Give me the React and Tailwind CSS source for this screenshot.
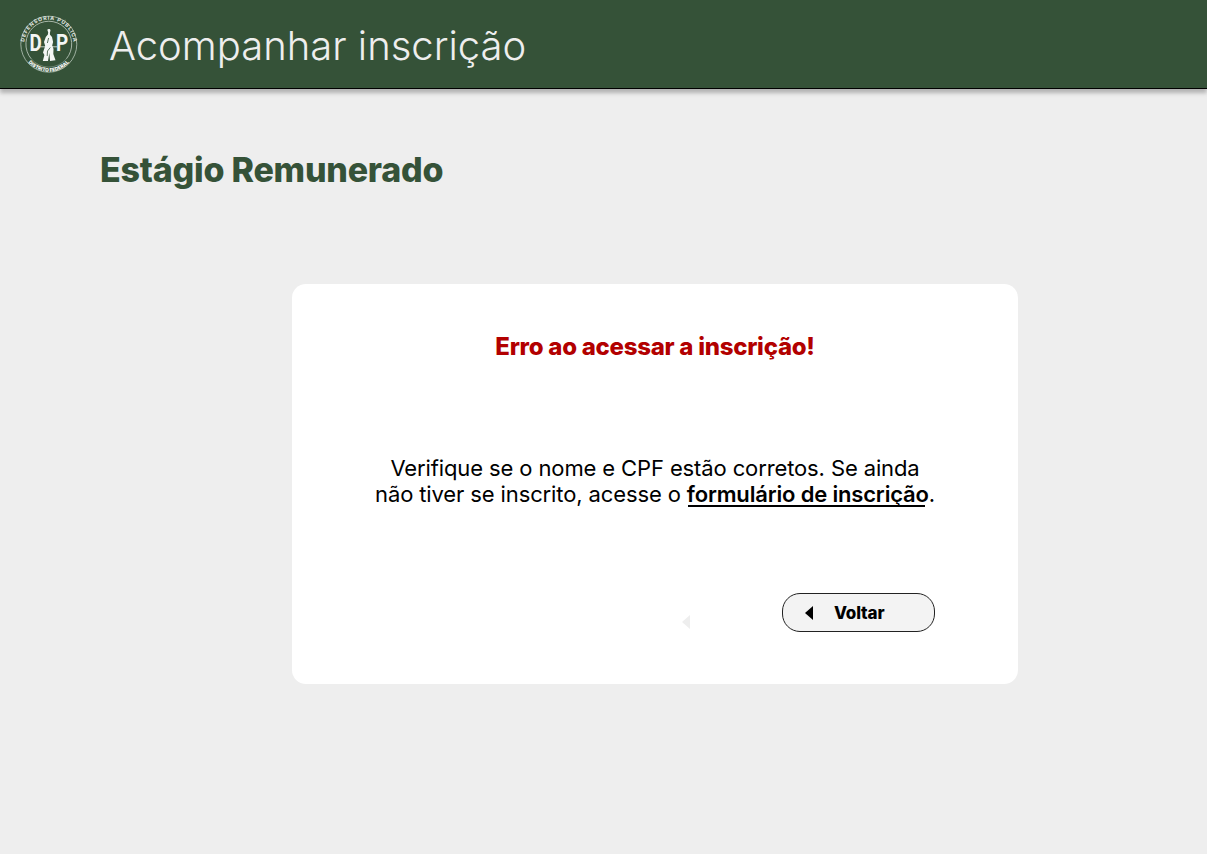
function Seal() {
  return (
    <svg className="h-[60px] w-[60px] shrink-0" viewBox="0 0 60 60" fill="none" role="img" aria-label="Defensoria Pública">
      <defs>
        <path id="seal-top" d="M5.3 30.2 A24.5 24.5 0 0 1 54.3 30.2" />
        <path id="seal-bottom" d="M2.3 30.2 A27.5 27.5 0 0 0 57.3 30.2" />
      </defs>
      <circle cx="29.8" cy="30.2" r="28" stroke="#a9baac" strokeWidth="0.9" />
      <path d="M12.2 44.8 A22.9 22.9 0 1 1 47.4 44.8" stroke="#b4c2b6" strokeWidth="0.9" />
      <path d="M12.2 44.8 A22.9 22.9 0 0 0 47.4 44.8" stroke="#8fa392" strokeWidth="0.6" />
      <text fill="#d7dfd8" fontSize="5.2" fontWeight="800" fontFamily="Inter, sans-serif" textAnchor="middle">
        <textPath href="#seal-top" startOffset="50%" textLength="72">DEFENSORIA PÚBLICA</textPath>
      </text>
      <text fill="#f4f6f4" fontSize="5" fontWeight="900" fontFamily="Inter, sans-serif" textAnchor="middle">
        <textPath href="#seal-bottom" startOffset="50%" textLength="46" lengthAdjust="spacingAndGlyphs">DISTRITO FEDERAL</textPath>
      </text>
      <text x="10.4" y="37" fill="#f4f6f4" fontSize="24.5" fontWeight="700" fontFamily="Roboto, sans-serif" textLength="12.2" lengthAdjust="spacingAndGlyphs">D</text>
      <text x="37" y="37" fill="#f4f6f4" fontSize="24.5" fontWeight="700" fontFamily="Roboto, sans-serif" textLength="12.2" lengthAdjust="spacingAndGlyphs">P</text>
      <path d="M21 32.8 H38" stroke="#e4e9e4" strokeWidth="0.8" />
      <path d="M28.3 15.8 C28.8 14.6 31.3 14.6 31.5 16.2 L30.9 19 L31 20.8 L33 23 L34.1 28 L33.2 31.5 L34.5 35 L34.3 40 L36.5 46.2 L31 47 L30.4 39 L29 47 H23.8 L25.4 41 L24 38.5 L26.2 32 L25 28 L26.8 23 L28.9 20.5 L29.2 18.6 Z" fill="#f4f6f4" />
      <path d="M29.6 24 L28.4 29 M31.3 33.5 L28.5 37 L28.2 42" stroke="#355238" strokeWidth="0.8" />
    </svg>
  );
}

function Arrow({ className }) {
  return (
    <svg className={className} viewBox="0 0 8 14" fill="currentColor" aria-hidden="true">
      <path d="M8 0 V14 L0 7 Z" />
    </svg>
  );
}

export default function App() {
  return (
    <div className="flex h-[854px] w-full flex-col overflow-hidden bg-[#eeeeee] font-['Inter',sans-serif]">
      <header className="flex h-[89px] shrink-0 items-center border-b border-black bg-[#355238] pl-[19px] shadow-[0_4px_4px_rgba(0,0,0,0.25)]">
        <Seal />
        <h1 className="ml-[30px] pt-[3px] text-[40px] leading-[48px] font-light whitespace-nowrap text-[#eeeeee]">
          Acompanhar inscrição
        </h1>
      </header>
      <main className="flex flex-col">
        <h2 className="mt-[61px] ml-[100px] text-[34px] leading-[40px] font-extrabold tracking-[-0.22px] whitespace-nowrap text-[#355238]">
          Estágio Remunerado
        </h2>
        <section className="mt-[94px] ml-[292px] flex h-[399.5px] w-[726px] flex-col items-center rounded-[14px] bg-white">
          <h3 className="mt-[48px] text-[24px] leading-[30px] font-extrabold tracking-[-0.27px] whitespace-nowrap text-[#b20000]">
            Erro ao acessar a inscrição!
          </h3>
          <p className="mt-[93px] text-center text-[22px] leading-[26px] font-normal tracking-[-0.12px] whitespace-nowrap text-black">
            Verifique se o nome e CPF estão corretos. Se ainda
            <br />
            não tiver se inscrito, acesse o{" "}
            <a className="relative font-semibold tracking-[-0.17px] after:absolute after:bottom-0 after:left-[1px] after:h-[2px] after:w-[237px] after:bg-black" href="#formulario">
              formulário de inscrição
            </a>
            .
          </p>
          <div className="mt-[86px] flex w-full items-center justify-end pr-[83px]">
            <Arrow className="mt-[18px] mr-[92px] h-[14px] w-[8px] text-[#eeeeee]" />
            <button className="flex h-[39px] w-[153px] items-center rounded-[18px] border border-[#222222] bg-[#f3f3f3] pt-[1px] pl-[22px] text-[17px] font-extrabold tracking-[-0.15px] text-black">
              <Arrow className="mr-[21px] h-[14px] w-[8px]" />
              <span className="pt-[1px]">Voltar</span>
            </button>
          </div>
        </section>
      </main>
    </div>
  );
}
